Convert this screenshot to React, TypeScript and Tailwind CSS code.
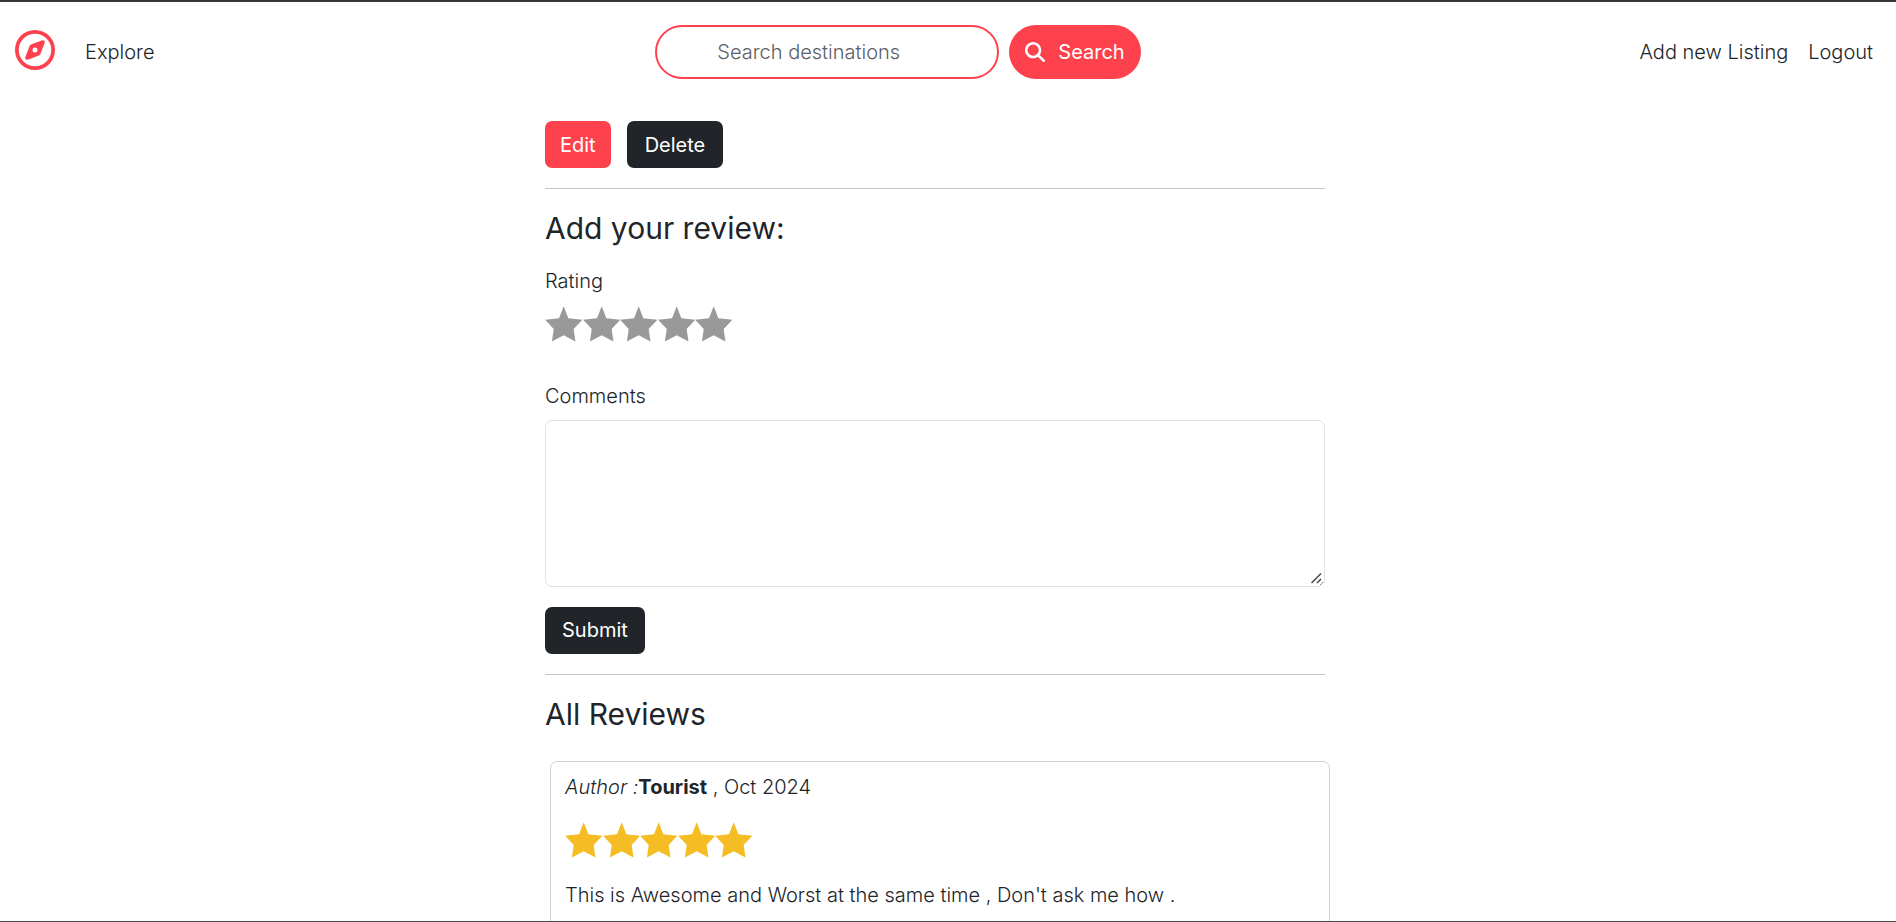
import React, { useState } from "react";
import { FaMagnifyingGlass, FaRegCompass } from "react-icons/fa6";

type Review = {
  author: string;
  date: string;
  rating: number;
  comment: string;
};

const REVIEWS: Review[] = [
  {
    author: "Tourist",
    date: "Oct 2024",
    rating: 5,
    comment: "This is Awesome and Worst at the same time , Don't ask me how .",
  },
];

const STARS = [1, 2, 3, 4, 5];

function Star({ filled }: { filled: boolean }) {
  return (
    <svg
      viewBox="0 0 37 36"
      className={filled ? "w-full text-[#f5bd23]" : "w-full text-[#999999]"}
      aria-hidden="true"
    >
      <path
        d="M18.4 0.3 23 12 36.8 13.5 28.2 22.7 30 35 18.4 28.9 6.8 35 8.6 22.7 0.1 13.5 13.8 12Z"
        fill="currentColor"
      />
    </svg>
  );
}

function Header() {
  return (
    <header className="flex items-center justify-between px-[15px] py-[23px]">
      <nav className="flex items-center gap-5">
        <a href="#home" aria-label="Home" className="pb-1 text-[#fe424d]">
          <FaRegCompass className="size-10" />
        </a>
        <a href="#explore" className="px-2.5">
          Explore
        </a>
      </nav>

      <form
        role="search"
        className="flex gap-2.5"
        onSubmit={(e) => e.preventDefault()}
      >
        <input
          type="search"
          aria-label="Search destinations"
          placeholder="Search destinations"
          className="h-[54px] w-[344px] rounded-full border-2 border-[#fe424d] pr-5 pl-[60px] placeholder:text-[#5a6066]"
        />
        <button
          type="submit"
          className="flex h-[54px] items-center gap-[13px] rounded-full bg-[#fe424d] px-4 font-normal text-white"
        >
          <FaMagnifyingGlass className="size-5" />
          Search
        </button>
      </form>

      <nav className="flex gap-5 px-2">
        <a href="#new">Add new Listing</a>
        <a href="#logout">Logout</a>
      </nav>
    </header>
  );
}

function ReviewForm() {
  const [rating, setRating] = useState(0);
  const [comment, setComment] = useState("");

  return (
    <form onSubmit={(e) => e.preventDefault()}>
      <h2 className="mb-[19px] text-3xl leading-[38px] font-normal">
        Add your review:
      </h2>
      <fieldset className="mb-[38px]">
        <legend className="leading-[30px]">Rating</legend>
        <div className="mt-2.5 grid w-[188px] grid-cols-5">
          {STARS.map((value) => (
            <label key={value} className="cursor-pointer">
              <input
                type="radio"
                name="rating"
                value={value}
                aria-label={`${value} stars`}
                checked={rating === value}
                onChange={() => setRating(value)}
                className="sr-only"
              />
              <Star filled={value <= rating} />
            </label>
          ))}
        </div>
      </fieldset>
      <label htmlFor="comment" className="mb-[9px] block leading-[30px]">
        Comments
      </label>
      <div className="relative mb-5">
        <textarea
          id="comment"
          value={comment}
          onChange={(e) => setComment(e.target.value)}
          className="block h-[167px] w-full resize-y rounded-[7px] border border-[#dee2e6] px-4 py-2"
        />
        {/* resize grip, drawn over the browser's own */}
        <svg
          viewBox="0 0 14 14"
          className="pointer-events-none absolute right-0.5 bottom-0.5 size-3.5 rounded-br-[5px] bg-white"
          aria-hidden="true"
        >
          <path
            d="M2.5 12 12 2.5M8 12l4-4"
            stroke="#43464c"
            strokeWidth="1.5"
            fill="none"
          />
        </svg>
      </div>
      <button
        type="submit"
        className="h-[47px] rounded-[7px] bg-[#212529] px-[17px] font-normal text-white"
      >
        Submit
      </button>
    </form>
  );
}

function ReviewCard({ review }: { review: Review }) {
  return (
    <article className="ml-[5px] -mr-[5px] rounded-[7px] border border-[#cfd2d4] px-3.5 pt-2.5 pb-5">
      <h3 className="leading-[30px]">
        <i>Author :</i>
        <b className="font-bold">{review.author}</b> , {review.date}
      </h3>
      <div
        role="img"
        aria-label={`${review.rating} out of 5 stars`}
        className="mt-5 mb-[22px] grid w-[188px] grid-cols-5"
      >
        {STARS.map((value) => (
          <Star key={value} filled={value <= review.rating} />
        ))}
      </div>
      <p className="leading-[30px]">{review.comment}</p>
    </article>
  );
}

export default function App() {
  return (
    <div className="flex h-screen flex-col border-t-2 border-b border-t-[#38363b] border-b-[#4a4a4a] bg-white font-['Inter',sans-serif] text-xl font-light text-[#212529]">
      <Header />
      <main className="min-h-0 flex-1 overflow-y-auto pt-[19px] pr-[26px] [scrollbar-width:none]">
        <div className="mx-auto max-w-[780px]">
          <div className="flex gap-4">
            <a
              href="#edit"
              className="flex h-[47px] items-center rounded-[7px] bg-[#fe424d] px-[15px] font-normal text-white"
            >
              Edit
            </a>
            <button
              type="button"
              className="h-[47px] rounded-[7px] bg-[#212529] px-[18px] font-normal text-white"
            >
              Delete
            </button>
          </div>
          <hr className="my-5 h-px border-0 bg-[#c4c5c6]" />
          <ReviewForm />
          <hr className="my-5 h-px border-0 bg-[#c4c5c6]" />
          <h2 className="mb-7 text-3xl leading-[38px] font-normal">
            All Reviews
          </h2>
          {REVIEWS.map((review) => (
            <ReviewCard key={review.author} review={review} />
          ))}
        </div>
      </main>
    </div>
  );
}
